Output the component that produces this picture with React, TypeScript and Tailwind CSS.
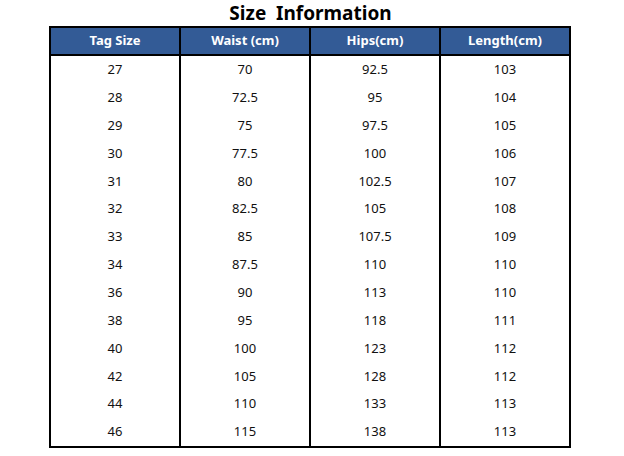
import React from "react";

const rows = [
  ["27", "70", "92.5", "103"],
  ["28", "72.5", "95", "104"],
  ["29", "75", "97.5", "105"],
  ["30", "77.5", "100", "106"],
  ["31", "80", "102.5", "107"],
  ["32", "82.5", "105", "108"],
  ["33", "85", "107.5", "109"],
  ["34", "87.5", "110", "110"],
  ["36", "90", "113", "110"],
  ["38", "95", "118", "111"],
  ["40", "100", "123", "112"],
  ["42", "105", "128", "112"],
  ["44", "110", "133", "113"],
  ["46", "115", "138", "113"],
];

const headers = ["Tag Size", "Waist (cm)", "Hips(cm)", "Length(cm)"];

export default function App() {
  return (
    <div
      className="w-[624px] h-[456px] bg-white flex flex-col items-center"
      style={{ fontFamily: '"Noto Sans", "Open Sans", sans-serif' }}
    >
      <div className="h-[26px] w-full flex items-center justify-center">
        <span className="text-[19px] font-bold leading-[26px] text-black whitespace-pre ml-[-3px]">
          {"Size  Information"}
        </span>
      </div>
      <div className="w-[522px] border-2 border-black flex flex-col ml-[-4px]">
        <div className="grid grid-cols-[128px_130px_130px_130px] h-[28px] bg-[#335b96] border-b-2 border-black">
          {headers.map((h, i) => (
            <div
              key={h}
              className={`flex items-center justify-center text-white font-bold text-[13px] ${i > 0 ? "border-l-2 border-black" : ""}`}
            >
              {h}
            </div>
          ))}
        </div>
        <div className="grid grid-cols-[128px_130px_130px_130px]">
          {rows.map((r, ri) =>
            r.map((c, ci) => (
              <div
                key={`${ri}-${ci}`}
                className={`h-[27.86px] flex items-center justify-center text-[13px] text-[#111] ${ci > 0 ? "border-l-2 border-black" : ""}`}
              >
                {c}
              </div>
            ))
          )}
        </div>
      </div>
    </div>
  );
}
